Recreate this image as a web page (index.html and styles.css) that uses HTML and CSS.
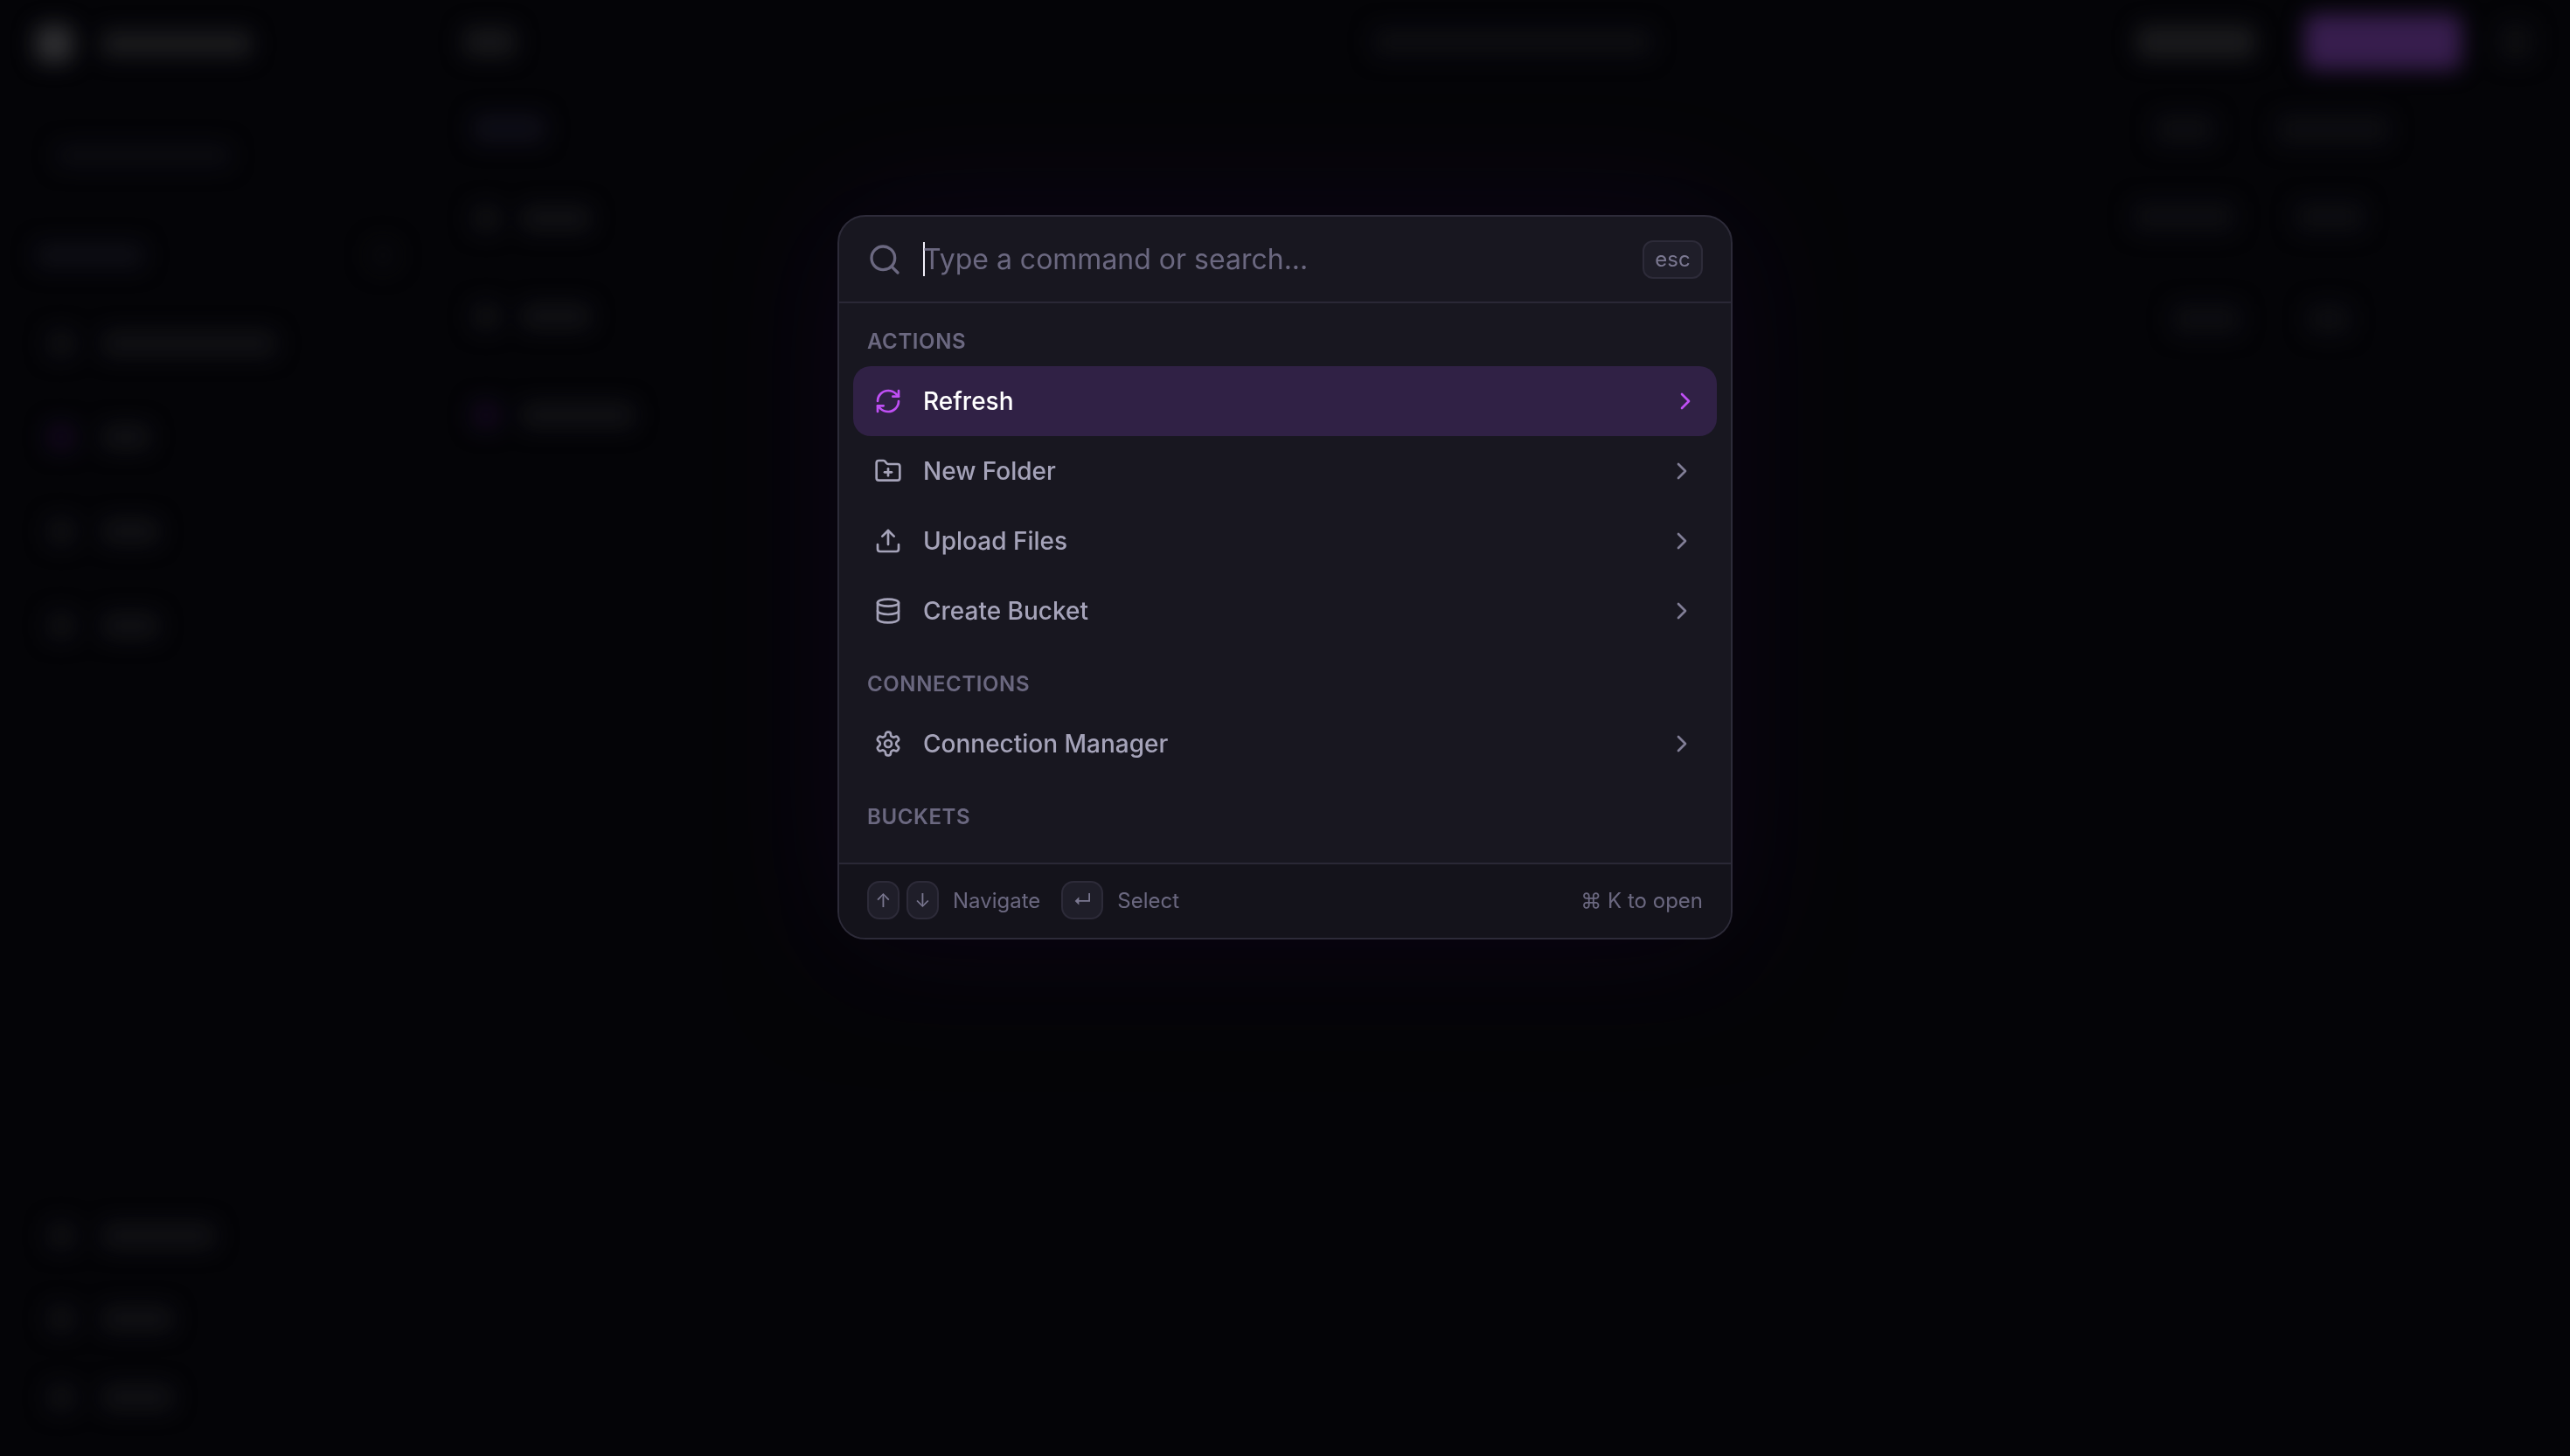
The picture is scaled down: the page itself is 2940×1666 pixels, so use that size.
FILE: index.html
```html
<!DOCTYPE html>
<html lang="en">
<head>
<meta charset="utf-8">
<title>Command palette</title>
<link rel="stylesheet" href="styles.css">
</head>
<body>
<div class="app" aria-hidden="true">
  <aside class="sidebar">
    <div class="srow logo-row"><i class="blob logo-mark"></i><i class="blob logo-text"></i></div>
    <div class="srow"><i class="blob side-search"></i></div>
    <div class="srow"><i class="blob side-title"></i><i class="blob side-add"></i></div>
    <div class="srow"><i class="blob ico"></i><i class="blob t200"></i></div>
    <div class="srow"><i class="blob ico ico-purple"></i><i class="blob t60"></i></div>
    <div class="srow"><i class="blob ico"></i><i class="blob t70"></i></div>
    <div class="srow"><i class="blob ico"></i><i class="blob t70"></i></div>
    <div class="srow"></div>
    <div class="srow"><i class="blob ico"></i><i class="blob t130"></i></div>
    <div class="srow"><i class="blob ico"></i><i class="blob t85"></i></div>
    <div class="srow"><i class="blob ico"></i><i class="blob t85"></i></div>
  </aside>
  <div class="content">
    <header class="topbar">
      <i class="blob crumb"></i>
      <i class="blob top-search"></i>
      <div class="top-actions">
        <i class="blob btn-ghost"></i>
        <i class="blob btn-primary"></i>
        <i class="blob btn-icon"></i>
      </div>
    </header>
    <div class="panes">
      <div class="tree">
        <div class="trow trow-a"><i class="blob tree-root"></i></div>
        <div class="trow trow-b"><i class="blob ico"></i><i class="blob t80"></i></div>
        <div class="trow trow-c"><i class="blob ico"></i><i class="blob t80"></i></div>
        <div class="trow trow-d"><i class="blob ico ico-purple"></i><i class="blob t130"></i></div>
      </div>
      <div class="details">
        <div class="drow drow-a"><i class="blob da1"></i><i class="blob da2"></i></div>
        <div class="drow drow-b"><i class="blob db1"></i><i class="blob db2"></i></div>
        <div class="drow drow-c"><i class="blob dc1"></i><i class="blob dc2"></i></div>
      </div>
    </div>
  </div>
</div>

<div class="overlay">
  <section class="palette">
    <div class="search">
      <svg class="icon search-icon" viewBox="0 0 24 24"><circle cx="11" cy="11" r="8"/><path d="m21 21-4.3-4.3"/></svg>
      <div class="field"><span class="caret"></span><span class="placeholder">Type a command or search...</span></div>
      <kbd class="esc">esc</kbd>
    </div>
    <div class="list">
      <div class="label">Actions</div>
      <div class="item item-active">
        <svg class="icon" viewBox="0 0 24 24"><path d="M3 12a9 9 0 0 1 9-9 9.75 9.75 0 0 1 6.74 2.74L21 8"/><path d="M21 3v5h-5"/><path d="M21 12a9 9 0 0 1-9 9 9.75 9.75 0 0 1-6.74-2.74L3 16"/><path d="M8 16H3v5"/></svg>
        <span class="item-text">Refresh</span>
        <svg class="icon chevron" viewBox="0 0 24 24"><path d="m9 18 6-6-6-6"/></svg>
      </div>
      <div class="item">
        <svg class="icon" viewBox="0 0 24 24"><path d="M12 10v6"/><path d="M9 13h6"/><path d="M20 20a2 2 0 0 0 2-2V8a2 2 0 0 0-2-2h-7.9a2 2 0 0 1-1.69-.9L9.6 3.9A2 2 0 0 0 7.93 3H4a2 2 0 0 0-2 2v13a2 2 0 0 0 2 2Z"/></svg>
        <span class="item-text">New Folder</span>
        <svg class="icon chevron" viewBox="0 0 24 24"><path d="m9 18 6-6-6-6"/></svg>
      </div>
      <div class="item">
        <svg class="icon" viewBox="0 0 24 24"><path d="M21 15v4a2 2 0 0 1-2 2H5a2 2 0 0 1-2-2v-4"/><path d="m17 8-5-5-5 5"/><path d="M12 3v12"/></svg>
        <span class="item-text">Upload Files</span>
        <svg class="icon chevron" viewBox="0 0 24 24"><path d="m9 18 6-6-6-6"/></svg>
      </div>
      <div class="item">
        <svg class="icon" viewBox="0 0 24 24"><ellipse cx="12" cy="5" rx="9" ry="3"/><path d="M3 5V19A9 3 0 0 0 21 19V5"/><path d="M3 12A9 3 0 0 0 21 12"/></svg>
        <span class="item-text">Create Bucket</span>
        <svg class="icon chevron" viewBox="0 0 24 24"><path d="m9 18 6-6-6-6"/></svg>
      </div>
      <div class="label">Connections</div>
      <div class="item">
        <svg class="icon" viewBox="0 0 24 24"><path d="M12.22 2h-.44a2 2 0 0 0-2 2v.18a2 2 0 0 1-1 1.73l-.43.25a2 2 0 0 1-2 0l-.15-.08a2 2 0 0 0-2.73.73l-.22.38a2 2 0 0 0 .73 2.73l.15.1a2 2 0 0 1 1 1.72v.51a2 2 0 0 1-1 1.74l-.15.09a2 2 0 0 0-.73 2.73l.22.38a2 2 0 0 0 2.73.73l.15-.08a2 2 0 0 1 2 0l.43.25a2 2 0 0 1 1 1.73V20a2 2 0 0 0 2 2h.44a2 2 0 0 0 2-2v-.18a2 2 0 0 1 1-1.73l.43-.25a2 2 0 0 1 2 0l.15.08a2 2 0 0 0 2.73-.73l.22-.39a2 2 0 0 0-.73-2.73l-.15-.08a2 2 0 0 1-1-1.74v-.5a2 2 0 0 1 1-1.74l.15-.09a2 2 0 0 0 .73-2.73l-.22-.38a2 2 0 0 0-2.73-.73l-.15.08a2 2 0 0 1-2 0l-.43-.25a2 2 0 0 1-1-1.73V4a2 2 0 0 0-2-2z"/><circle cx="12" cy="12" r="3"/></svg>
        <span class="item-text">Connection Manager</span>
        <svg class="icon chevron" viewBox="0 0 24 24"><path d="m9 18 6-6-6-6"/></svg>
      </div>
      <div class="label">Buckets</div>
    </div>
    <footer class="foot">
      <div class="hint">
        <kbd class="key key-arrow">↑</kbd><kbd class="key key-arrow">↓</kbd>
        <span class="hint-text">Navigate</span>
        <kbd class="key key-enter">↵</kbd>
        <span class="hint-text">Select</span>
      </div>
      <span class="open">⌘ K to open</span>
    </footer>
  </section>
</div>
</body>
</html>
```

FILE: styles.css
```css
* { box-sizing: border-box; }
html, body { margin: 0; height: 100%; background: #050508; overflow: hidden; }
body { font-family: Inter, "Liberation Sans", sans-serif; }

/* blurred application behind the palette */
.app { display: flex; height: 1666px; filter: blur(12px); }
.blob { display: block; flex: none; height: 30px; border-radius: 8px; background: #141417; }

.sidebar {
  flex: none; width: 510px; display: grid; padding-left: 54px;
  grid-template-rows: 100px 156px 72px 130px 84px 132px 84px 582px 148px 42px 138px;
}
.srow { display: flex; align-items: center; gap: 30px; }
.logo-row { margin-left: -14px; gap: 32px; }
.ico { width: 32px; height: 32px; background: #121215; }
.ico-purple { background: #150a1f; }
.logo-mark { width: 44px; height: 44px; border-radius: 12px; background: #363638; }
.logo-text { width: 172px; height: 30px; background: #202022; }
.side-search { width: 200px; height: 26px; margin-left: 10px; background: #0e0e13; }
.side-title { width: 125px; margin-left: -14px; background: #101017; }
.side-add { width: 36px; height: 36px; margin-left: 225px; border-radius: 50%; background: #0b0b0d; }
.t60 { width: 56px; }
.t70 { width: 66px; }
.t80 { width: 80px; }
.t85 { width: 82px; }
.t130 { width: 130px; }
.t200 { width: 200px; }

.content { flex: 1; display: flex; flex-direction: column; }
.topbar { flex: none; height: 96px; display: flex; align-items: center; padding-left: 20px; }
.crumb { width: 60px; height: 34px; background: #1b1b1d; }
.top-search { width: 320px; height: 34px; background: #0f0f13; margin-left: 980px; }
.top-actions { display: flex; align-items: center; margin-left: 554px; }
.btn-ghost { width: 136px; height: 38px; background: #1f1f21; }
.btn-primary { width: 180px; height: 64px; margin-left: 56px; background: #41235a; border-radius: 12px; }
.btn-icon { width: 40px; height: 44px; margin-left: 42px; background: #0f0f12; }

.panes { flex: 1; display: flex; justify-content: space-between; }
.tree { padding-left: 30px; }
.trow { display: flex; align-items: center; gap: 24px; }
.trow-a { height: 102px; }
.trow-b { height: 104px; }
.trow-c { height: 120px; }
.trow-d { height: 106px; }
.tree-root { width: 84px; height: 34px; background: #11101a; }

.details { width: 516px; }
.drow { display: flex; align-items: center; }
.drow-a { height: 104px; }
.drow-b { height: 96px; }
.drow-c { height: 138px; }
.details .blob { height: 36px; background: #0f0f13; }
.da1 { width: 70px; margin-left: 40px; }
.da2 { width: 130px; margin-left: 70px; }
.db1 { width: 118px; margin-left: 15px; }
.db2 { width: 80px; margin-left: 68px; }
.dc1 { width: 80px; margin-left: 60px; }
.dc2 { width: 50px; margin-left: 75px; }

/* palette */
.overlay {
  position: fixed; inset: 0; display: flex; justify-content: center; align-items: flex-start;
  padding-top: 246px; background: rgba(2, 2, 5, .15);
}
.palette {
  width: 1024px; height: 829px; display: flex; flex-direction: column; overflow: hidden;
  background: #181720; border: 2px solid #2d2b39; border-radius: 32px;
  box-shadow: 0 0 160px rgba(110, 40, 200, .10), 0 30px 120px rgba(0, 0, 0, .5);
}
.icon {
  flex: none; width: 32px; height: 32px; fill: none; stroke: currentColor; stroke-width: 2;
  stroke-linecap: round; stroke-linejoin: round;
}
.search {
  flex: none; height: 99px; display: flex; align-items: center; gap: 24px;
  padding: 0 32px; border-bottom: 2px solid #2a2836;
}
.search-icon { width: 40px; height: 40px; color: #6b6880; }
.field { flex: 1; display: flex; align-items: center; }
.caret { flex: none; width: 2px; height: 39px; margin-right: -2px; background: #f2f0fa; }
.placeholder { font-size: 32px; line-height: 40px; color: #6b6880; }
.esc {
  display: flex; align-items: center; justify-content: center; width: 69px; height: 44px;
  font: 400 24px Inter, sans-serif; color: #7a7790;
  background: #1f1e29; border: 2px solid #2d2b39; border-radius: 12px;
}
.list { flex: none; height: 640px; overflow: hidden; padding: 0 16px; }
.label {
  height: 72px; padding: 28px 16px 12px; font-size: 24px; line-height: 32px; font-weight: 600;
  letter-spacing: .6px; text-transform: uppercase; color: #6b6880;
}
.item {
  height: 80px; display: flex; align-items: center; gap: 24px; padding: 0 24px;
  border-radius: 20px; color: #a5a3b9;
}
.item-text { flex: 1; font-size: 28px; line-height: 40px; font-weight: 500; }
.item-active { background: #302145; color: #bf4ff5; }
.item-active .item-text { color: #fff; }
.item .chevron { color: #817e96; }
.item-active .chevron { color: #bf4ff5; transform: translateX(4px); }

.foot {
  flex: none; height: 86px; display: flex; align-items: center; justify-content: space-between;
  padding: 0 32px; background: #14131b; border-top: 2px solid #2a2836;
  font-size: 24px; color: #6b6880;
}
.hint { display: flex; align-items: center; transform: translateY(-1px); }
.open { transform: translateY(-1px); }
.key {
  display: flex; align-items: center; justify-content: center; height: 44px;
  font: 400 22px Inter, sans-serif; color: #7a7790;
  background: #1f1e29; border: 2px solid #2d2b39; border-radius: 14px;
}
.key-arrow { width: 37px; margin-right: 8px; }
.key-enter { width: 48px; margin-left: 24px; }
.hint-text { margin-left: 8px; }
.key-enter + .hint-text { margin-left: 16px; }
```
